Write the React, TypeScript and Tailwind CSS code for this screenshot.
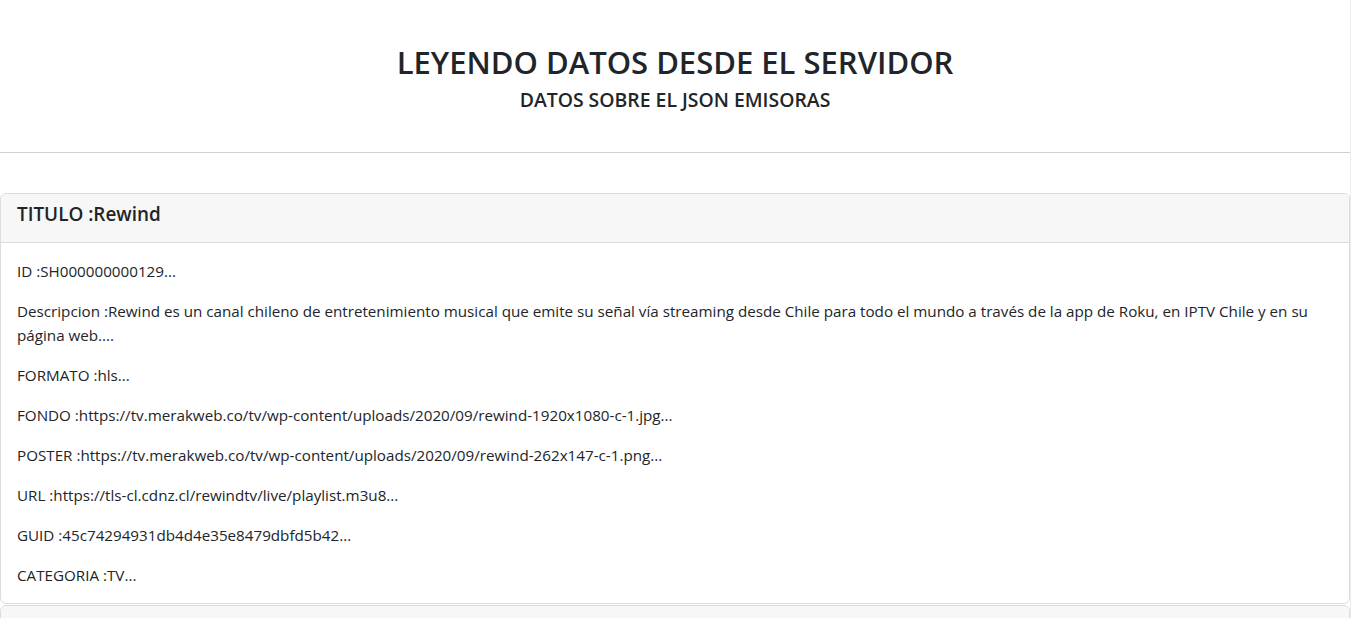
// datos de ejemplo
const emisoras = [
  {
    titulo: "Rewind",
    id: "SH000000000129",
    descripcion:
      "Rewind es un canal chileno de entretenimiento musical que emite su señal vía streaming desde Chile para todo el mundo a través de la app de Roku, en IPTV Chile y en su página web.",
    formato: "hls",
    fondo: "https://tv.merakweb.co/tv/wp-content/uploads/2020/09/rewind-1920x1080-c-1.jpg",
    poster: "https://tv.merakweb.co/tv/wp-content/uploads/2020/09/rewind-262x147-c-1.png",
    url: "https://tls-cl.cdnz.cl/rewindtv/live/playlist.m3u8",
    guid: "45c74294931db4d4e35e8479dbfd5b42",
    categoria: "TV",
  },
  {
    titulo: "Zona Latina",
    id: "SH000000000130",
    descripcion: "Canal musical chileno.",
    formato: "hls",
    fondo: "",
    poster: "",
    url: "",
    guid: "",
    categoria: "TV",
  },
];

export default function App() {
  return (
    <div
      className="w-[1351px] min-h-screen bg-white text-[#212529] border-r border-[#ececec]"
      style={{ fontFamily: '"Open Sans", "Noto Sans", sans-serif' }}
    >
      <header className="pt-[43px] text-center">
        <h1 className="text-[31px] leading-[38px] font-semibold mb-2">LEYENDO DATOS DESDE EL SERVIDOR</h1>
        <h5 className="text-[19.4px] leading-[22px] font-semibold">DATOS SOBRE EL JSON EMISORAS</h5>
      </header>

      <hr className="mt-[41px] mb-[40px] border-0 border-t border-[#cfd0d1]" />

      <section className="flex flex-col gap-[1px]">
        {emisoras.map((e) => (
          <div key={e.id} className="border border-[#dcdcdc] rounded-[6px] overflow-hidden">
            <div className="bg-[#f7f7f7] border-b border-[#dcdcdc] px-4 py-2">
              <h5 className="text-[18.9px] leading-[24px] font-semibold mb-2">TITULO :{e.titulo}</h5>
            </div>
            <div className="p-4 text-[15.2px] leading-[24px] flex flex-col gap-4">
              <p>ID :{e.id}...</p>
              <p>Descripcion :{e.descripcion}...</p>
              <p>FORMATO :{e.formato}...</p>
              <p>FONDO :{e.fondo}...</p>
              <p>POSTER :{e.poster}...</p>
              <p>URL :{e.url}...</p>
              <p>GUID :{e.guid}...</p>
              <p>CATEGORIA :{e.categoria}...</p>
            </div>
          </div>
        ))}
      </section>
    </div>
  );
}
